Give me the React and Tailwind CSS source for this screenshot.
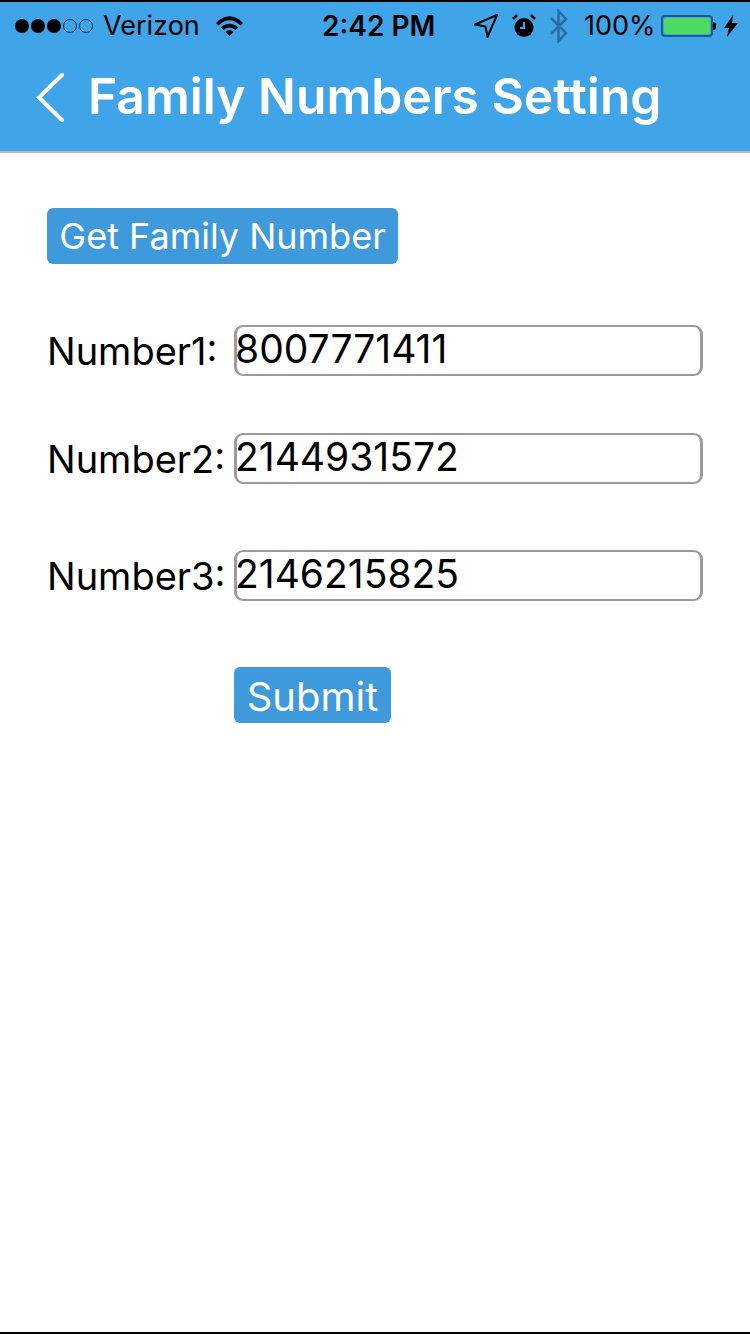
const SANS = "font-['Inter','Liberation_Sans',sans-serif]";

function StatusBar() {
  return (
    <div className="flex h-[48px] items-center pl-[15px] text-[27px] text-black">
      <div className="flex w-[307px] items-center">
        <div className="flex items-center gap-[2px]">
          <span className="size-[14px] rounded-full bg-black" />
          <span className="size-[14px] rounded-full bg-black" />
          <span className="size-[14px] rounded-full bg-black" />
          <span className="size-[14px] rounded-full border border-black/70" />
          <span className="size-[14px] rounded-full border border-black/70" />
        </div>
        <span className="ml-[10px]">Verizon</span>
        <svg className="ml-[15px]" width="29" height="22" viewBox="0 0 29 22">
          <path d="M1 8C9-1 20-1 28 8l-2.500 2.500C18.500 3.500 10.500 3.500 3.500 10.500Z" fill="#000" />
          <path d="M6 12.500C11 7.500 18 7.500 23 12.500l-2.500 2.500C16.500 11.500 12.500 11.500 8.500 15Z" fill="#000" />
          <path d="M10.500 17C13 14.500 16 14.500 18.500 17L14.500 21Z" fill="#000" />
        </svg>
      </div>
      <span className="w-[152px] text-[28px] font-semibold">2:42 PM</span>
      <svg width="24" height="24" viewBox="0 0 24 24">
        <path d="M23 1 1 10.500l10.500 2 2 10.500Z" fill="none" stroke="#000" strokeWidth="2" strokeLinejoin="round" />
      </svg>
      <svg className="ml-[14px]" width="24" height="24" viewBox="0 0 24 24">
        <circle cx="12" cy="13.500" r="9.500" fill="#000" />
        <path d="M12 8v6h-4" fill="none" stroke="#3fa4e8" strokeWidth="2" />
        <path d="M1 5 5 1M23 5l-4-4" stroke="#000" strokeWidth="2.500" />
      </svg>
      <svg className="ml-[13px]" width="20" height="34" viewBox="0 0 20 34">
        <path d="M2 9 17 24 9.500 32V2L17 10 2 25" fill="none" stroke="#2d6d9e" strokeWidth="2.500" />
      </svg>
      <span className="ml-[15px]">100%</span>
      <div className="ml-[5px] flex items-center">
        <div className="h-[22px] w-[52px] rounded-[4px] border-2 border-[#1f5a80] p-[1px]">
          <div className="size-full rounded-[2px] bg-[#4cd964]" />
        </div>
        <div className="h-[8px] w-[3px] rounded-r-sm bg-black" />
      </div>
      <svg className="ml-[8px]" width="14" height="22" viewBox="0 0 14 22">
        <path d="M9 0 0 13h5l-2 9 11-14H8Z" fill="#000" />
      </svg>
    </div>
  );
}

function NumberRow({ label, value, className }) {
  return (
    <div className={`flex h-[51px] items-center ${className}`}>
      <label className="w-[187px] pt-[2px] text-[38px] text-black">{label}</label>
      <input
        className="h-[51px] w-[469px] rounded-[9px] border-x-[3px] border-y-2 border-[#9b9b9b] pb-[3px] indent-[-2px] text-[39px] text-black outline-none"
        type="text"
        value={value}
        readOnly
      />
    </div>
  );
}

export default function App() {
  return (
    <div className={`flex h-[1334px] flex-col bg-white ${SANS}`}>
      <div className="h-[153px] border-t-2 border-b-2 border-t-black border-b-[#b9b9b9] bg-[#3fa4e8]">
        <StatusBar />
        <div className="flex h-[93px] items-center pl-[36px]">
          <svg className="mt-[3px]" width="30" height="52" viewBox="0 0 30 52">
            <path d="M26 3 3 25.500 26 48" fill="none" stroke="#fff" strokeWidth="4" strokeLinecap="round" />
          </svg>
          <h1 className="ml-[22px] text-[49.800px] font-semibold text-white">Family Numbers Setting</h1>
        </div>
      </div>

      <div className="flex-1 pl-[47px] pt-[55px]">
        <button className="h-[56px] w-[351px] rounded-[6px] bg-[#3e9ada] text-[36px] text-white" type="button">
          Get Family Number
        </button>
        <NumberRow className="mt-[61px]" label="Number1:" value="8007771411" />
        <NumberRow className="mt-[57px]" label="Number2:" value="2144931572" />
        <NumberRow className="mt-[66px]" label="Number3:" value="2146215825" />
        <button className="ml-[187px] mt-[66px] h-[56px] w-[157px] rounded-[6px] bg-[#3e9ada] text-[40px] text-white" type="button">
          Submit
        </button>
      </div>

      <div className="h-[2px] bg-black" />
    </div>
  );
}
